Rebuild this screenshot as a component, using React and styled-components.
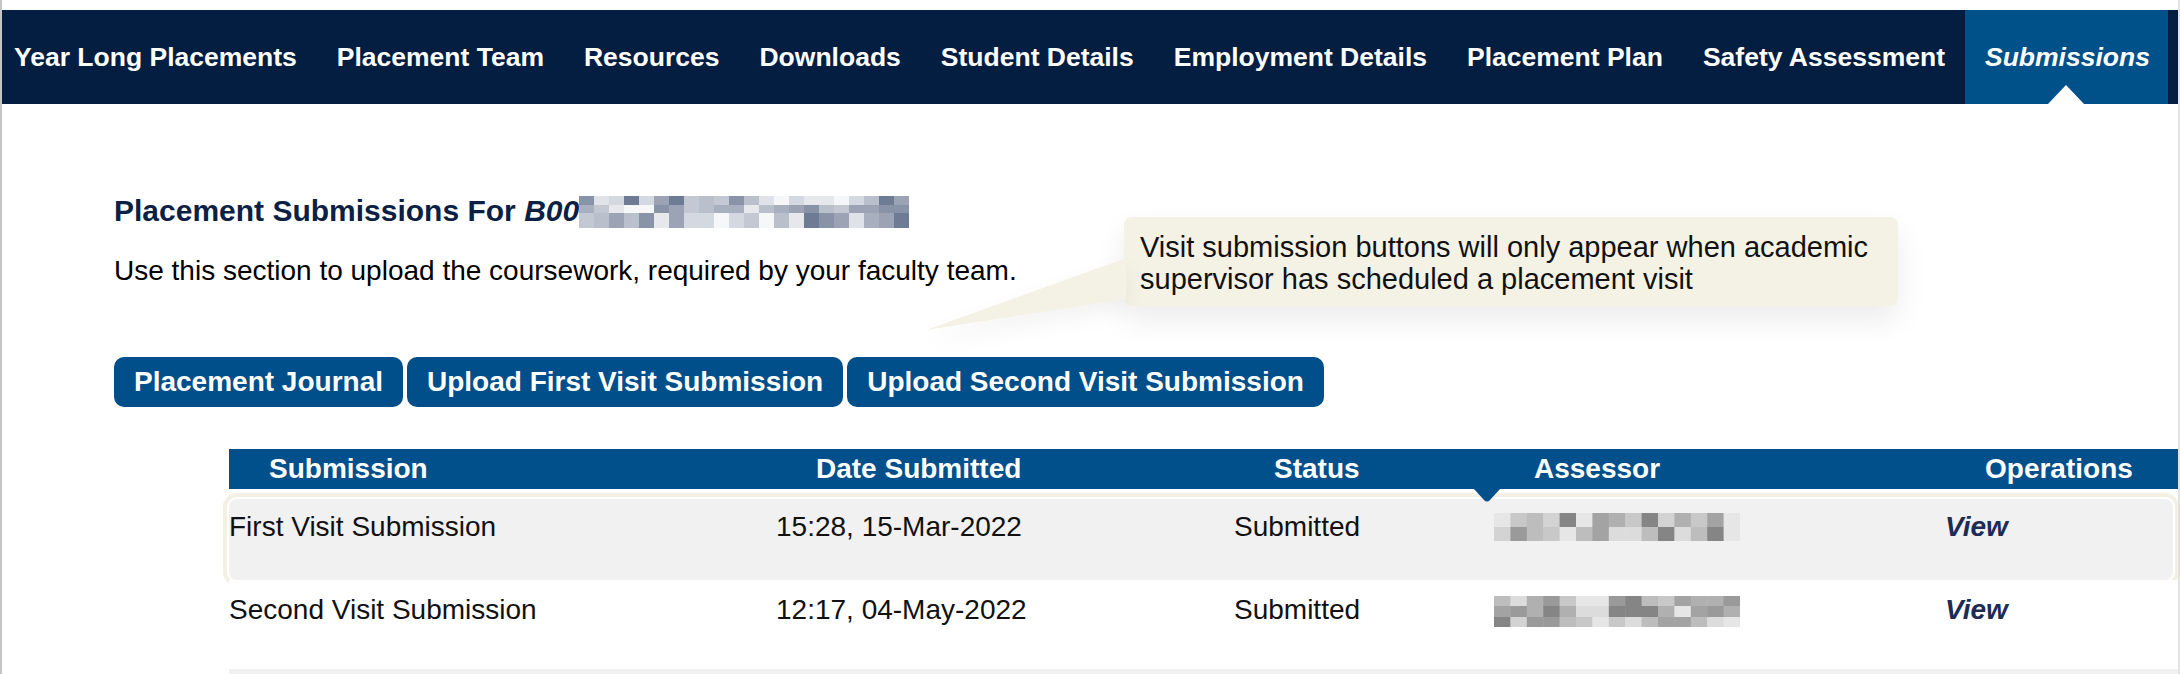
import React from 'react'
import styled, { createGlobalStyle } from 'styled-components'

const GlobalStyle = createGlobalStyle`
  html, body {
    margin: 0;
    padding: 0;
    background: #fff;
  }
  body {
    font-family: "Liberation Sans", Arial, Helvetica, sans-serif;
    color: #000;
  }
  * {
    box-sizing: border-box;
  }
`

const navItems = [
    'Year Long Placements',
    'Placement Team',
    'Resources',
    'Downloads',
    'Student Details',
    'Employment Details',
    'Placement Plan',
    'Safety Assessment',
    'Submissions',
]

const submissions = [
    { name: 'First Visit Submission', date: '15:28, 15-Mar-2022', status: 'Submitted', seed: 7, highlighted: true },
    { name: 'Second Visit Submission', date: '12:17, 04-May-2022', status: 'Submitted', seed: 23 },
]

const headingPalette = ['#a8afbe', '#6e7b94', '#d4d8e0', '#c3c8d2', '#e6e8ec', '#f6f7f9', '#8893a7', '#9ba3b4', '#b9bfcb', '#dfe2e8']
const assessorPalette = ['#a3a3a3', '#bdbdbd', '#d3d3d3', '#858585', '#e6e6e6', '#c8c8c8', '#9a9a9a', '#b0b0b0', '#dcdcdc']

// pixelated redaction, drawn as a little grid of blocks
const Mosaic = ({ width, rowHeights, cols, palette, seed }) => {
    let s = seed
    const next = () => {
        s = (s * 9301 + 49297) % 233280
        return s / 233280
    }
    const cell = width / cols
    const height = rowHeights.reduce((a, b) => a + b, 0)
    const rects = []
    let y = 0
    rowHeights.forEach((h, r) => {
        for (let c = 0; c < cols; c++) {
            rects.push(
                <rect key={`${r}-${c}`} x={c * cell} y={y} width={cell + 0.5} height={h + 0.5}
                    fill={palette[Math.floor(next() * palette.length)]} />
            )
        }
        y += h
    })
    return (
        <MosaicSvg width={width} height={height} viewBox={`0 0 ${width} ${height}`}>
            {rects}
        </MosaicSvg>
    )
}

const App = () => {
    return (
        <>
            <GlobalStyle />
            <Page>
                <Nav>
                    {navItems.map((item) => (
                        <NavItem key={item} $active={item === 'Submissions'}>{item}</NavItem>
                    ))}
                </Nav>

                <Content>
                    <Heading>
                        Placement Submissions For <em>B00</em>
                        <Mosaic width={330} rowHeights={[9, 8, 15]} cols={22} palette={headingPalette} seed={11} />
                    </Heading>
                    <Intro>Use this section to upload the coursework, required by your faculty team.</Intro>

                    <Tooltip>
                        <TooltipTail width="200" height="72" viewBox="0 0 200 72">
                            <polygon points="200,0 0,72 200,41" fill="#f4f2e5" />
                        </TooltipTail>
                        Visit submission buttons will only appear when academic supervisor has scheduled a placement visit
                    </Tooltip>

                    <ButtonRow>
                        <ActionButton>Placement Journal</ActionButton>
                        <ActionButton>Upload First Visit Submission</ActionButton>
                        <ActionButton>Upload Second Visit Submission</ActionButton>
                    </ButtonRow>

                    <Table>
                        <HeaderRow>
                            <HeaderCell>Submission</HeaderCell>
                            <HeaderCell>Date Submitted</HeaderCell>
                            <HeaderCell>Status</HeaderCell>
                            <HeaderCell>Assessor</HeaderCell>
                            <HeaderCell>Operations</HeaderCell>
                            <Notch width="26" height="14" viewBox="0 0 26 14">
                                <path d="M0 0 H26 L16 11 Q13 14 10 11 Z" fill="#02508b" />
                            </Notch>
                        </HeaderRow>
                        {submissions.map((row) => (
                            <Row key={row.name} $highlighted={row.highlighted}>
                                <Cell>{row.name}</Cell>
                                <Cell>{row.date}</Cell>
                                <Cell>{row.status}</Cell>
                                <Cell>
                                    <Mosaic width={246} rowHeights={row.highlighted ? [14, 14] : [10, 11, 10]} cols={15}
                                        palette={assessorPalette} seed={row.seed} />
                                </Cell>
                                <ViewLink>View</ViewLink>
                            </Row>
                        ))}
                        <Row $shaded />
                    </Table>
                </Content>
            </Page>
        </>
    )
}

export default App

const Page = styled.div`
    height: 674px;
    overflow: hidden;
    padding-top: 10px;
    border-left: 2px solid #c6c6c6;
    border-right: 2px solid #e2e2e2;
`

const Nav = styled.nav`
    display: flex;
    height: 94px;
    background: #041e42;
`

const NavItem = styled.div`
    position: relative;
    display: flex;
    align-items: center;
    padding: 0 20px;
    color: #fff;
    font-size: 26.5px;
    font-weight: 700;
    white-space: nowrap;
    font-style: ${(p) => (p.$active ? 'italic' : 'normal')};
    background: ${(p) => (p.$active ? '#00508a' : 'transparent')};

    &:first-child {
        padding-left: 12px;
    }

    &:last-child {
        padding-right: 18px;
    }

    &::after {
        content: '';
        display: ${(p) => (p.$active ? 'block' : 'none')};
        position: absolute;
        left: 50%;
        bottom: 0;
        margin-left: -18px;
        border-left: 18px solid transparent;
        border-right: 18px solid transparent;
        border-bottom: 19px solid #fff;
    }
`

const Content = styled.main`
    position: relative;
    padding: 90px 0 0 112px;
`

const Heading = styled.h2`
    margin: 0;
    font-size: 30px;
    line-height: 34px;
    font-weight: 700;
    color: #0c1f44;
    white-space: nowrap;

    em {
        font-style: italic;
    }
`

const MosaicSvg = styled.svg`
    display: inline-block;
    vertical-align: -7px;
`

const Intro = styled.p`
    margin: 27px 0 0;
    font-size: 28px;
    line-height: 32px;
`

const Tooltip = styled.div`
    position: absolute;
    left: 1122px;
    top: 113px;
    width: 774px;
    padding: 14px 20px 11px 16px;
    background: #f4f2e5;
    border-radius: 8px;
    font-size: 29px;
    line-height: 32px;
    color: #111;
    box-shadow: 0 14px 30px rgba(0, 0, 0, 0.08);
    z-index: 2;
`

const TooltipTail = styled.svg`
    position: absolute;
    left: -198px;
    top: 41px;
    filter: drop-shadow(0 10px 10px rgba(0, 0, 0, 0.05));
`

const ButtonRow = styled.div`
    display: flex;
    gap: 4px;
    margin-top: 70px;
`

const ActionButton = styled.button`
    height: 50px;
    padding: 0 20px;
    border: none;
    border-radius: 10px;
    background: #004e8a;
    color: #fff;
    font-family: "Liberation Sans", Arial, sans-serif;
    font-size: 28px;
    font-weight: 700;
    white-space: nowrap;
`

const Table = styled.div`
    margin: 42px 0 0 115px;
`

const columns = '547px 458px 260px 451px 1fr'

const HeaderRow = styled.div`
    position: relative;
    display: grid;
    grid-template-columns: ${columns};
    align-items: center;
    height: 40px;
    background: #02508b;
    color: #fff;
    font-size: 28px;
    font-weight: 700;
`

const HeaderCell = styled.div`
    padding-left: 40px;
    white-space: nowrap;
`

const Notch = styled.svg`
    position: absolute;
    left: 1245px;
    top: 40px;
`

const Row = styled.div`
    display: grid;
    grid-template-columns: ${columns};
    align-items: start;
    height: ${(p) => (p.$highlighted ? '81px' : '89px')};
    margin: ${(p) => (p.$highlighted ? '10px 5px 0 0' : '0')};
    padding-top: ${(p) => (p.$highlighted ? '12px' : '14px')};
    font-size: 28px;
    line-height: 32px;
    color: #111;
    background: ${(p) => (p.$highlighted || p.$shaded ? '#f1f1f1' : '#fff')};
    border-radius: ${(p) => (p.$highlighted ? '8px' : '0')};
    box-shadow: ${(p) => (p.$highlighted ? '0 0 0 2px #fff, 0 0 0 6px #f3f1e3' : 'none')};
`

const Cell = styled.div`
    white-space: nowrap;
    line-height: 32px;

    svg {
        display: block;
        margin-top: 2px;
    }
`

const ViewLink = styled.a`
    color: #1c2c55;
    font-weight: 700;
    font-style: italic;
    cursor: pointer;
`
